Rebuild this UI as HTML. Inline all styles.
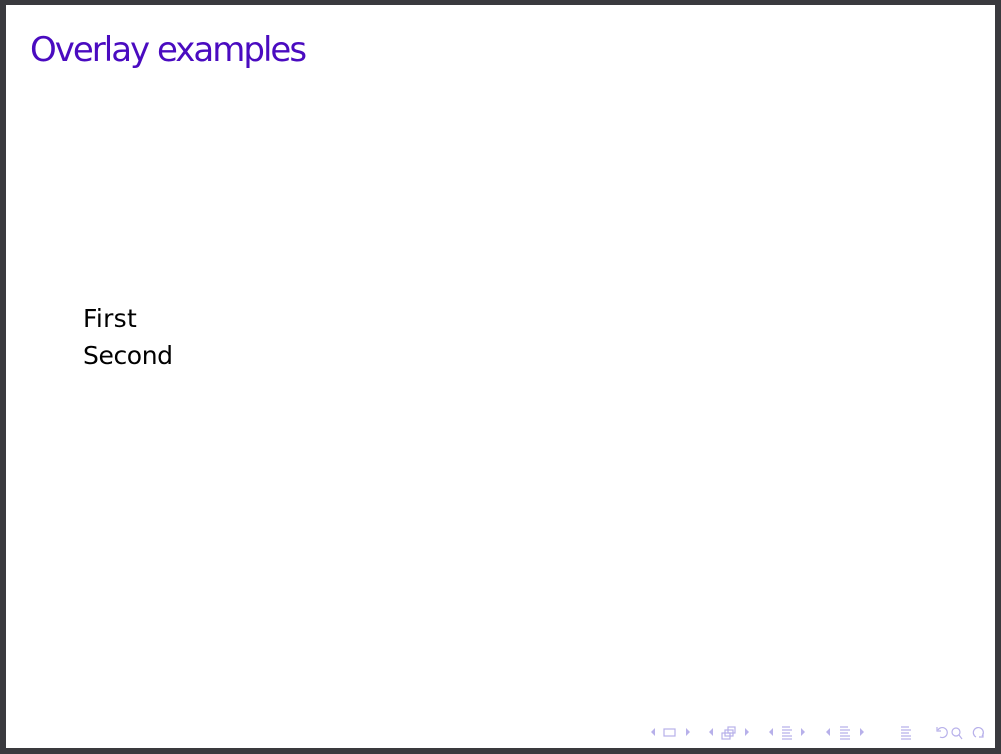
<!DOCTYPE html>
<html><head><style>
html,body{margin:0;padding:0;width:1001px;height:754px;background:#3a3a3e;overflow:hidden}
#s{position:absolute;left:6px;top:5px;width:989px;height:743px;background:#fff}
.t{position:absolute;font-family:"DejaVu Sans","Liberation Sans",sans-serif;white-space:nowrap}
#title{left:24px;top:25px;font-size:34px;color:#4a0bc0;letter-spacing:-2px}
.b{font-size:25px;color:#000;left:77px;letter-spacing:-0.4px}
#nav{position:absolute;left:645px;top:723px}
</style></head><body>
<div id="s">
<div class="t" id="title">Overlay examples</div>
<div class="t b" style="top:299px;letter-spacing:0.3px">First</div>
<div class="t b" style="top:336px">Second</div>
</div>
<svg id="nav" width="350" height="20" viewBox="645 723 350 20" fill="none" stroke="#b7b0ea" stroke-width="1.2">
<path d="M655 728l-4 4 4 4z" fill="#b7b0ea" stroke="none"/>
<rect x="664" y="729" width="11" height="7"/>
<path d="M686 728l4 4-4 4z" fill="#b7b0ea" stroke="none"/>
<path d="M713 728l-4 4 4 4z" fill="#b7b0ea" stroke="none"/>
<rect x="722" y="733" width="8" height="6"/><rect x="725" y="730" width="8" height="6"/><rect x="728" y="727" width="7" height="6"/>
<path d="M745 728l4 4-4 4z" fill="#b7b0ea" stroke="none"/>
<path d="M773 728l-4 4 4 4z" fill="#b7b0ea" stroke="none"/>
<path d="M782 727h8M782 730h10M782 733h8M782 736h10M782 739h10"/>
<path d="M801 728l4 4-4 4z" fill="#b7b0ea" stroke="none"/>
<path d="M830 728l-4 4 4 4z" fill="#b7b0ea" stroke="none"/>
<path d="M840 727h8M840 730h10M840 733h8M840 736h10M840 739h10"/>
<path d="M860 728l4 4-4 4z" fill="#b7b0ea" stroke="none"/>
<path d="M901 727h8M901 730h10M901 733h8M901 736h10M901 739h10"/>
<path d="M938 730a5 5 0 1 1 2 7M937 727v4h4"/>
<circle cx="956" cy="732" r="4"/><path d="M959 735l3 4"/>
<path d="M976 737a5 5 0 1 1 6-1M983 733v4h-4"/>
</svg>
</body></html>
